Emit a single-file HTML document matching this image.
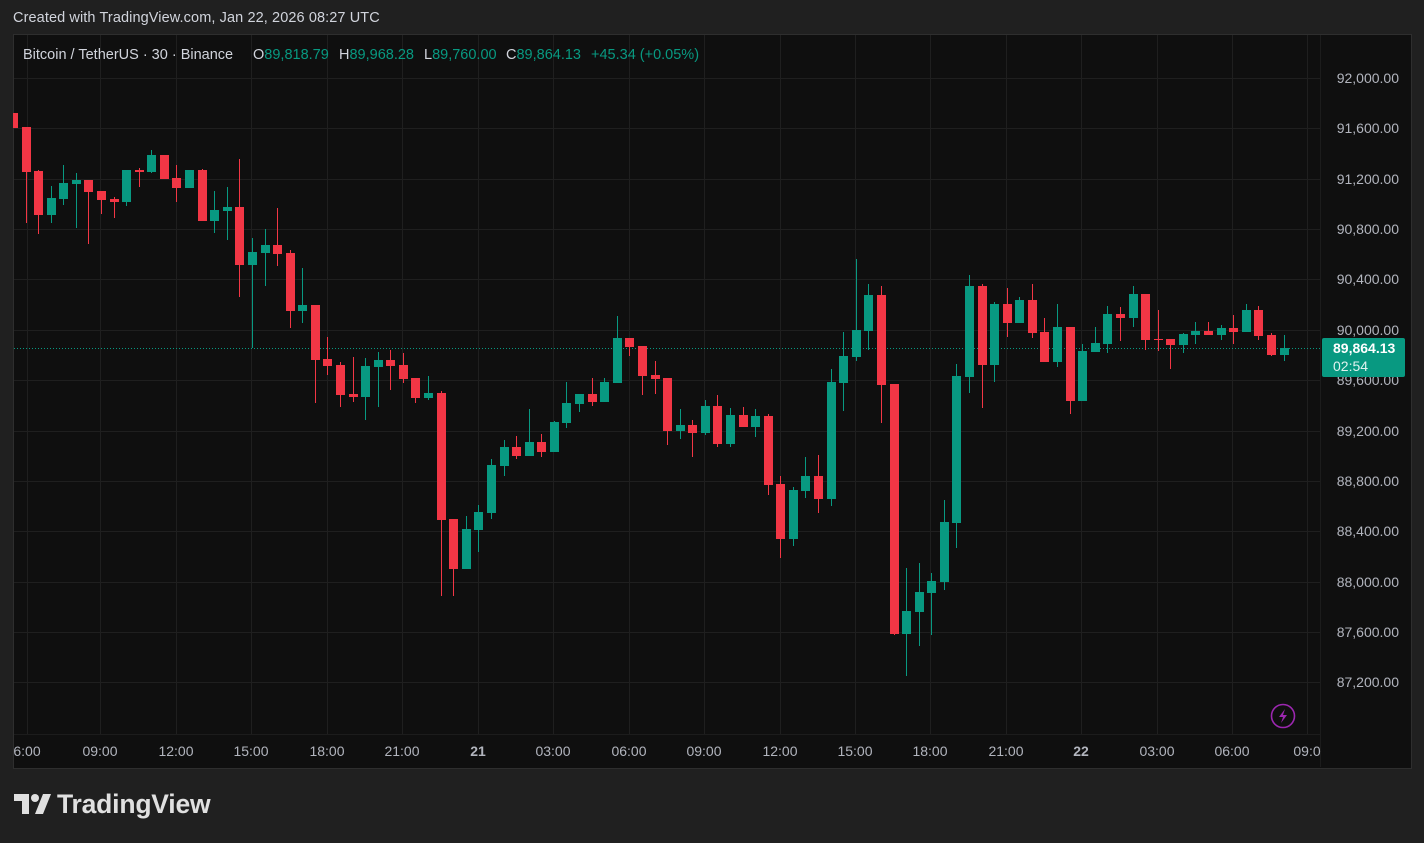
<!DOCTYPE html>
<html><head><meta charset="utf-8"><style>
html,body{margin:0;padding:0;background:#202020;width:1424px;height:843px;overflow:hidden;font-family:"Liberation Sans",sans-serif}
.top{position:absolute;left:13px;top:10px;color:#d1d4dc;font-size:14.5px;letter-spacing:0.1px}
.panel{position:absolute;left:13px;top:34px;width:1397px;height:733px;background:#0f0f0f;border:1px solid #2e2e2e}
svg{position:absolute;left:0;top:0}
.logo{position:absolute;left:14px;top:789px;color:#e0e0e0;font-size:26.5px;font-weight:bold;letter-spacing:-0.2px}
</style></head><body>
<div class="top">Created with TradingView.com, Jan 22, 2026 08:27 UTC</div>
<div class="panel"></div>
<svg id="c" width="1424" height="843" xmlns="http://www.w3.org/2000/svg" font-family="Liberation Sans, sans-serif">
<g id="grid" stroke="#1f1f1f" stroke-width="1"></g>
<line x1="1320.5" y1="35" x2="1320.5" y2="767" stroke="#1c1c1c"/>
<line x1="14" y1="734.5" x2="1320" y2="734.5" stroke="#1c1c1c"/>
<line x1="14" y1="348.5" x2="1320" y2="348.5" stroke="#089981" stroke-dasharray="1,2"/>
<g id="candles"></g>
<g id="plabels" fill="#b2b5be" font-size="14" text-anchor="end"></g>
<g id="tlabels" fill="#b2b5be" font-size="14" text-anchor="middle"></g>
<g font-size="14.5">
<text x="23" y="59" fill="#d1d4dc">Bitcoin / TetherUS · 30 · Binance</text>
<text x="253" y="59" fill="#d1d4dc">O<tspan fill="#089981">89,818.79</tspan></text>
<text x="339" y="59" fill="#d1d4dc">H<tspan fill="#089981">89,968.28</tspan></text>
<text x="424" y="59" fill="#d1d4dc">L<tspan fill="#089981">89,760.00</tspan></text>
<text x="506" y="59" fill="#d1d4dc">C<tspan fill="#089981">89,864.13</tspan></text>
<text x="591" y="59" fill="#089981">+45.34 (+0.05%)</text>
</g>
<rect x="1322" y="338" width="83" height="39" rx="2" fill="#089981"/>
<text x="1333" y="353" fill="#fff" font-size="14" font-weight="bold">89,864.13</text>
<text x="1333" y="371" fill="#e0f2ef" font-size="14">02:54</text>
<circle cx="1283" cy="716" r="11.5" fill="none" stroke="#9c27b0" stroke-width="1.6"/>
<path d="M1285 709 L1279 717 L1283 717 L1281 723 L1287 715 L1283 715 Z" fill="#9c27b0"/>
<rect x="0" y="0" width="13" height="843" fill="#202020"/>
</svg>
<div class="logo"><svg style="position:relative;top:3px;margin-right:5px" width="38" height="22" viewBox="0 0 38 22"><path d="M0 0h15v20h-7V7H0z" fill="#e0e0e0"/><circle cx="21" cy="4" r="4" fill="#e0e0e0"/><path d="M29 0h8l-8 20h-8z" fill="#e0e0e0"/></svg>TradingView</div>
<script>
const NS="http://www.w3.org/2000/svg";
function el(p,t,a){const e=document.createElementNS(NS,t);for(const k in a)e.setAttribute(k,a[k]);p.appendChild(e);return e}
const g=document.getElementById('grid');
const py=[78,128,179,229,279,330,380,431,481,531,582,632,682];
const pl=["92,000.00","91,600.00","91,200.00","90,800.00","90,400.00","90,000.00","89,600.00","89,200.00","88,800.00","88,400.00","88,000.00","87,600.00","87,200.00"];
py.forEach((y,i)=>{el(g,'line',{x1:14,x2:1320,y1:y+.5,y2:y+.5});const t=el(document.getElementById('plabels'),'text',{x:1399,y:y+5});t.textContent=pl[i]});
const tx=[27,100,176,251,327,402,478,553,629,704,780,855,930,1006,1081,1157,1232,1307];
const tl=["6:00","09:00","12:00","15:00","18:00","21:00","21","03:00","06:00","09:00","12:00","15:00","18:00","21:00","22","03:00","06:00","09:0"];
tx.forEach((x,i)=>{el(g,'line',{x1:x+.5,x2:x+.5,y1:35,y2:734});const t=el(document.getElementById('tlabels'),'text',{x:x,y:756});if(tl[i]=="21"||tl[i]=="22")t.setAttribute('font-weight','bold');t.textContent=tl[i]});
const C=[[113,128,113,128],[127,172,127,223],[171,215,170,234],[215,198,186,223],[199,183,165,205],[184,180,173,228],[180,192,180,244],[191,200,191,214],[199,202,197,218],[202,170,170,206],[170,172,168,187],[172,155,150,173],[155,179,155,179],[178,188,165,202],[188,170,170,188],[170,221,169,221],[221,210,191,233],[211,207,187,240],[207,265,159,297],[265,252,238,348],[253,245,229,286],[245,254,208,266],[253,311,250,328],[311,305,268,323],[305,360,305,403],[359,366,337,375],[365,395,362,407],[394,397,357,402],[397,366,358,420],[367,360,352,407],[360,366,350,390],[365,379,353,383],[378,398,378,403],[398,393,376,400],[393,520,391,596],[519,569,519,596],[569,529,516,569],[530,512,505,552],[513,465,459,519],[466,447,440,476],[447,456,436,459],[456,442,409,456],[442,452,434,457],[452,422,421,452],[423,403,382,428],[404,394,394,412],[394,402,378,406],[402,382,378,402],[383,338,316,383],[338,347,338,356],[346,376,346,395],[375,379,361,394],[378,431,378,445],[431,425,409,439],[425,433,420,457],[433,406,400,435],[406,444,395,447],[444,415,408,447],[415,427,407,427],[427,416,409,437],[416,485,414,495],[484,539,476,558],[539,490,487,546],[491,476,457,498],[476,499,455,513],[499,382,369,506],[383,356,332,411],[357,330,259,361],[331,295,284,350],[295,385,286,423],[384,634,384,635],[634,611,568,676],[612,592,563,646],[593,581,573,635],[582,522,500,590],[523,376,364,548],[377,286,275,393],[286,365,284,408],[365,304,302,382],[304,323,288,337],[323,300,297,323],[300,333,284,338],[332,362,318,362],[362,327,304,367],[327,401,327,414],[401,351,344,401],[352,343,327,352],[344,314,306,353],[314,318,307,341],[318,294,286,327],[294,340,294,350],[339,340,310,351],[339,345,339,369],[345,334,333,353],[335,331,322,344],[331,335,322,335],[335,328,325,340],[328,332,315,344],[332,310,304,332],[310,336,306,340],[335,355,333,356],[355,348,335,361]];
const cg=document.getElementById('candles');
C.forEach((c,j)=>{const i=j-1;const x=Math.round(25.5+12.58*i);const [o,cl,h,l]=c;const col=cl>o?'#f23645':(cl<o?'#089981':'#f23645');
el(cg,'rect',{x:x,y:h,width:1,height:Math.max(1,l-h),fill:col});
const t=Math.min(o,cl),b=Math.max(o,cl);el(cg,'rect',{x:x-4,y:t,width:9,height:Math.max(1,b-t),fill:col});});
</script>
</body></html>
